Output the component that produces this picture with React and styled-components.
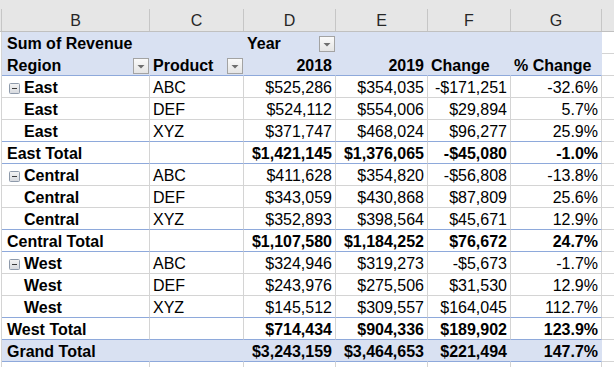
import React from 'react';
import styled, { createGlobalStyle, css } from 'styled-components';

const Global = createGlobalStyle`
  html, body { margin: 0; padding: 0; background: #ffffff; }
  body { font-family: "Liberation Sans", Arial, sans-serif; }
`;

const GRID = '#d4d4d4';
const BLUE_FILL = '#d9e1f2';
const BLUE_LINE = '#8ea9db';
const COLS = '148px 94px 92px 92px 83px 91px 12px';

const Sheet = styled.div`
  width: 614px;
  height: 367px;
  overflow: hidden;
  background: #fff;
  color: #000;
  font-size: 16px;
`;

const TopBand = styled.div`
  height: 9px;
  background: #e6e6e6;
`;

const ColumnHeaderBar = styled.div`
  display: grid;
  grid-template-columns: 2px ${COLS};
  height: 22px;
  background: #e6e6e6;
  border-bottom: 1px solid #c0c0c0;
  box-sizing: content-box;
`;

const ColHead = styled.div`
  box-sizing: border-box;
  height: 22px;
  border-right: 1px solid #c6c6c6;
  text-align: center;
  padding-top: 3px;
  line-height: 18px;
  font-size: 16px;
  color: #262626;
  &:last-child { border-right: none; }
`;

const Body = styled.div`
  margin-left: 1px;
  border-left: 1px solid ${GRID};
`;

const rowKinds = {
  header: css`
    background: ${BLUE_FILL};
    font-weight: bold;
  `,
  data: css`
    background: #fff;
  `,
  total: css`
    background: #fff;
    font-weight: bold;
  `,
  grand: css`
    background: ${BLUE_FILL};
    font-weight: bold;
  `,
};

const Row = styled.div`
  display: grid;
  grid-template-columns: ${COLS};
  height: 22px;
  ${(p) => rowKinds[p.$kind]}
`;

const Cell = styled.div`
  box-sizing: border-box;
  height: 22px;
  padding: 2px 3px 0 3px;
  line-height: 19px;
  white-space: nowrap;
  overflow: hidden;
  text-align: ${(p) => p.$align || 'left'};
  font-weight: ${(p) => (p.$bold ? 'bold' : 'inherit')};
  border-right: 1px solid ${(p) => p.$vline || GRID};
  border-bottom: 1px solid ${(p) => p.$hline || GRID};
  ${(p) => p.$first && css`padding-left: ${p.$indent ?? 5}px;`}
`;

const FilterCell = styled(Cell)`
  display: flex;
  align-items: flex-start;
  justify-content: space-between;
  padding-right: 0;
`;

const EmptyCell = styled.div`
  box-sizing: border-box;
  height: 22px;
  background: #fff;
  border-bottom: 1px solid ${GRID};
`;

const FilterButton = styled.span`
  display: block;
  width: 16px;
  height: 16px;
  margin-top: 2px;
  flex: none;
  svg { display: block; }
`;

const Collapse = styled.span`
  display: inline-block;
  width: 11px;
  height: 11px;
  margin-right: 4px;
  vertical-align: -1px;
  svg { display: block; }
`;

const DropIcon = () => (
  <FilterButton>
    <svg width="16" height="16" viewBox="0 0 16 16">
      <defs>
        <linearGradient id="dg" x1="0" y1="0" x2="0" y2="1">
          <stop offset="0" stopColor="#fbfbfb" />
          <stop offset="1" stopColor="#e4e4e4" />
        </linearGradient>
      </defs>
      <rect x="0.5" y="0.5" width="15" height="15" fill="url(#dg)" stroke="#a3a3a3" />
      <path d="M4.5 7 L11.5 7 L8 10.5 Z" fill="#6e6e6e" />
    </svg>
  </FilterButton>
);

const MinusIcon = () => (
  <Collapse>
    <svg width="11" height="11" viewBox="0 0 11 11">
      <defs>
        <linearGradient id="mg" x1="0" y1="0" x2="0" y2="1">
          <stop offset="0" stopColor="#f4f4f4" />
          <stop offset="1" stopColor="#d6d9de" />
        </linearGradient>
      </defs>
      <rect x="0.5" y="0.5" width="10" height="10" rx="1" fill="url(#mg)" stroke="#8e9aab" />
      <rect x="3" y="5" width="5" height="1" fill="#3c3c3c" />
    </svg>
  </Collapse>
);

const groups = [
  {
    region: 'East',
    rows: [
      ['ABC', '$525,286', '$354,035', '-$171,251', '-32.6%'],
      ['DEF', '$524,112', '$554,006', '$29,894', '5.7%'],
      ['XYZ', '$371,747', '$468,024', '$96,277', '25.9%'],
    ],
    total: ['$1,421,145', '$1,376,065', '-$45,080', '-1.0%'],
  },
  {
    region: 'Central',
    rows: [
      ['ABC', '$411,628', '$354,820', '-$56,808', '-13.8%'],
      ['DEF', '$343,059', '$430,868', '$87,809', '25.6%'],
      ['XYZ', '$352,893', '$398,564', '$45,671', '12.9%'],
    ],
    total: ['$1,107,580', '$1,184,252', '$76,672', '24.7%'],
  },
  {
    region: 'West',
    rows: [
      ['ABC', '$324,946', '$319,273', '-$5,673', '-1.7%'],
      ['DEF', '$243,976', '$275,506', '$31,530', '12.9%'],
      ['XYZ', '$145,512', '$309,557', '$164,045', '112.7%'],
    ],
    total: ['$714,434', '$904,336', '$189,902', '123.9%'],
  },
];

const grand = ['$3,243,159', '$3,464,653', '$221,494', '147.7%'];

const letters = ['B', 'C', 'D', 'E', 'F', 'G', ''];

export default function App() {
  return (
    <>
      <Global />
      <Sheet>
        <TopBand />
        <ColumnHeaderBar>
          <ColHead />
          {letters.map((l, i) => (
            <ColHead key={i}>{l}</ColHead>
          ))}
        </ColumnHeaderBar>
        <Body>
          <Row $kind="header">
            <Cell $first $vline={BLUE_FILL} $hline={BLUE_FILL}>Sum of Revenue</Cell>
            <Cell $vline={BLUE_FILL} $hline={BLUE_FILL} />
            <FilterCell $vline={BLUE_FILL} $hline={BLUE_FILL}>
              <span>Year</span>
              <DropIcon />
            </FilterCell>
            <Cell $vline={BLUE_FILL} $hline={BLUE_FILL} />
            <Cell $vline={BLUE_FILL} $hline={BLUE_FILL} />
            <Cell $hline={BLUE_FILL} $vline={BLUE_FILL} />
            <EmptyCell />
          </Row>
          <Row $kind="header">
            <FilterCell $first $vline={BLUE_FILL} $hline={BLUE_LINE}>
              <span>Region</span>
              <DropIcon />
            </FilterCell>
            <FilterCell $vline={BLUE_FILL} $hline={BLUE_LINE}>
              <span>Product</span>
              <DropIcon />
            </FilterCell>
            <Cell $align="right" $vline={BLUE_FILL} $hline={BLUE_LINE}>2018</Cell>
            <Cell $align="right" $vline={BLUE_FILL} $hline={BLUE_LINE}>2019</Cell>
            <Cell $vline={BLUE_FILL} $hline={BLUE_LINE}>Change</Cell>
            <Cell $vline={BLUE_FILL} $hline={BLUE_LINE}>% Change</Cell>
            <EmptyCell />
          </Row>
          {groups.map((g) => (
            <React.Fragment key={g.region}>
              {g.rows.map((r, i) => {
                const last = i === g.rows.length - 1;
                const h = last ? BLUE_LINE : GRID;
                return (
                  <Row $kind="data" key={r[0]}>
                    <Cell $first $indent={i === 0 ? 7 : 22} $bold $hline={h}>
                      {i === 0 && <MinusIcon />}
                      {g.region}
                    </Cell>
                    <Cell $hline={h}>{r[0]}</Cell>
                    <Cell $align="right" $hline={h}>{r[1]}</Cell>
                    <Cell $align="right" $hline={h}>{r[2]}</Cell>
                    <Cell $align="right" $hline={h}>{r[3]}</Cell>
                    <Cell $align="right" $hline={h}>{r[4]}</Cell>
                    <EmptyCell />
                  </Row>
                );
              })}
              <Row $kind="total">
                <Cell $first $hline={BLUE_LINE}>{g.region} Total</Cell>
                <Cell $hline={BLUE_LINE} />
                {g.total.map((v, i) => (
                  <Cell key={i} $align="right" $hline={BLUE_LINE}>{v}</Cell>
                ))}
                <EmptyCell />
              </Row>
            </React.Fragment>
          ))}
          <Row $kind="grand">
            <Cell $first $vline={BLUE_FILL} $hline={BLUE_LINE}>Grand Total</Cell>
            <Cell $vline={BLUE_FILL} $hline={BLUE_LINE} />
            {grand.map((v, i) => (
              <Cell key={i} $align="right" $vline={BLUE_FILL} $hline={BLUE_LINE}>{v}</Cell>
            ))}
            <EmptyCell />
          </Row>
          <Row $kind="data">
            <Cell />
            <Cell />
            <Cell />
            <Cell />
            <Cell />
            <Cell />
            <EmptyCell />
          </Row>
        </Body>
      </Sheet>
    </>
  );
}
